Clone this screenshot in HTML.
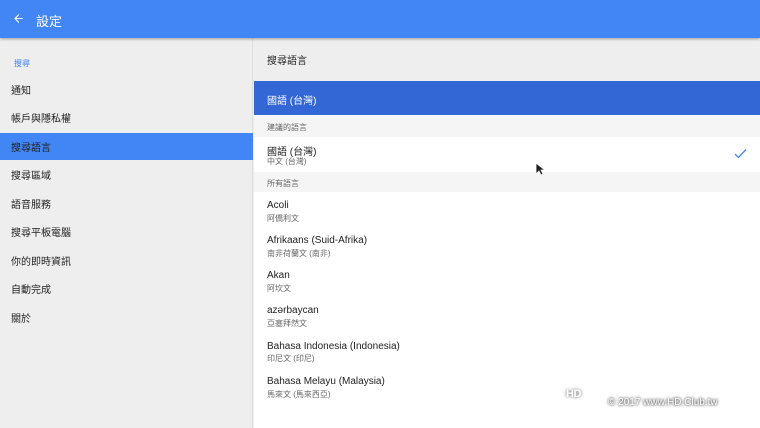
<!DOCTYPE html>
<html><head><meta charset="utf-8"><style>
*{margin:0;padding:0;box-sizing:border-box}
html,body{width:760px;height:428px;overflow:hidden}
body{background:#eee;font-family:"Liberation Sans","Noto Sans CJK TC",sans-serif;position:relative;color:#212121}
.hdr{position:absolute;left:0;top:0;width:760px;height:38px;background:#4285f4;box-shadow:0 1px 3px rgba(0,0,0,.35);z-index:2}
.hdr .t{position:absolute;left:36px;top:11px;color:#fff;font-size:13px}
.left{position:absolute;left:0;top:38px;width:253px;height:390px;background:#eee;border-right:1px solid #ddd}
.li{position:absolute;left:11px;font-size:10px;color:#222}
.sel{position:absolute;left:0;width:253px;height:27px;background:#4285f4}
.right{position:absolute;left:254px;top:38px;width:506px;height:390px}
.r{position:absolute;left:13px;font-size:10px;color:#222}
.s{position:absolute;left:13px;font-size:8px;color:#666}
</style></head><body>
<div class="hdr">
<svg style="position:absolute;left:12px;top:12px" width="13" height="13" viewBox="0 0 24 24"><path d="M20 11H7.8l5.6-5.6L12 4l-8 8 8 8 1.4-1.4L7.8 13H20z" fill="#fff"/></svg>
<div class="t">設定</div></div>
<div class="left">
<div class="li" style="top:20px;font-size:8px;color:#4285f4;left:14px">搜尋</div>
<div class="li" style="top:44px">通知</div>
<div class="li" style="top:72px">帳戶與隱私權</div>
<div class="sel" style="top:95px"></div>
<div class="li" style="top:101px">搜尋語言</div>
<div class="li" style="top:129px">搜尋區域</div>
<div class="li" style="top:158px">語音服務</div>
<div class="li" style="top:186px">搜尋平板電腦</div>
<div class="li" style="top:215px">你的即時資訊</div>
<div class="li" style="top:243px">自動完成</div>
<div class="li" style="top:272px">關於</div>
</div>
<div class="right">
<div class="r" style="top:14px">搜尋語言</div>
<div style="position:absolute;left:0;top:43px;width:506px;height:34px;background:#3367d6"></div>
<div class="r" style="top:54px;color:#fff">國語 (台灣)</div>
<div style="position:absolute;left:0;top:77px;width:506px;height:322px;background:#fff"></div>
<div style="position:absolute;left:0;top:78px;width:506px;height:21px;background:#f5f5f5"></div>
<div class="s" style="top:84px">建議的語言</div>
<div class="r" style="top:105px">國語 (台灣)</div>
<div class="s" style="top:118px">中文 (台灣)</div>
<svg style="position:absolute;left:480px;top:110px" width="13" height="11" viewBox="0 0 13 11"><path d="M1 6l3.5 3.5L12 1.5" stroke="#4285f4" stroke-width="1.3" fill="none"/></svg>
<div style="position:absolute;left:0;top:134px;width:506px;height:20px;background:#f5f5f5"></div>
<div class="s" style="top:140px">所有語言</div>
<div class="r" style="top:162px">Acoli</div><div class="s" style="top:175px">阿僑利文</div>
<div class="r" style="top:197px">Afrikaans (Suid-Afrika)</div><div class="s" style="top:210px">南非荷蘭文 (南非)</div>
<div class="r" style="top:232px">Akan</div><div class="s" style="top:245px">阿坎文</div>
<div class="r" style="top:267px">azərbaycan</div><div class="s" style="top:280px">亞塞拜然文</div>
<div class="r" style="top:303px">Bahasa Indonesia (Indonesia)</div><div class="s" style="top:315px">印尼文 (印尼)</div>
<div class="r" style="top:338px">Bahasa Melayu (Malaysia)</div><div class="s" style="top:351px">馬來文 (馬來西亞)</div>
<svg style="position:absolute;left:281px;top:124px" width="10" height="14" viewBox="0 0 10 14"><path d="M1 1v11l3-3 2 4 2-1-2-4h4z" fill="#222" stroke="#fff" stroke-width=".8"/></svg>
</div>
<div style="position:absolute;left:566px;top:388px;font-size:11px;font-weight:bold;color:#fff;text-shadow:0 0 3px #555;letter-spacing:-.5px">HD</div>
<div style="position:absolute;left:608px;top:397px;font-size:10px;color:#fff;text-shadow:0 0 2px #444,0 0 3px #666">© 2017 www.HD.Club.tw</div>
</body></html>
